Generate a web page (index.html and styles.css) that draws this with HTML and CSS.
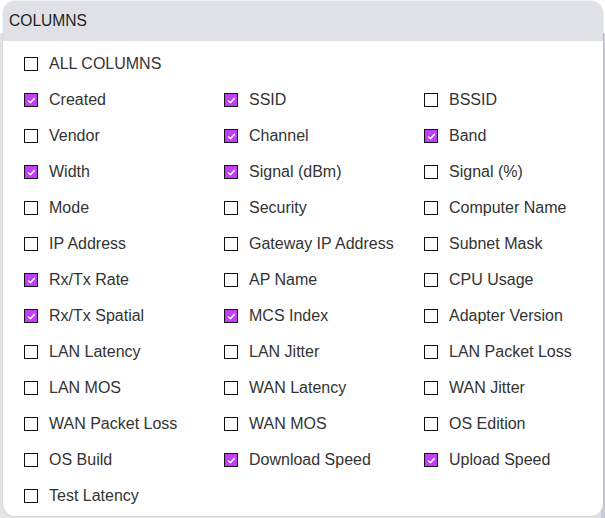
FILE: index.html
```html
<!DOCTYPE html>
<html>
<head>
<meta charset="utf-8">
<link rel="stylesheet" href="styles.css">
</head>
<body>
<div class="backdrop"></div>
<div class="popup">
  <div class="header">COLUMNS</div>
  <div class="body">
    <div class="row-all">
      <label class="item"><span class="box"></span><span class="label">ALL COLUMNS</span></label>
    </div>
    <div class="grid">
      <label class="item"><span class="box on"></span><span class="label">Created</span></label>
      <label class="item"><span class="box on"></span><span class="label">SSID</span></label>
      <label class="item"><span class="box"></span><span class="label">BSSID</span></label>

      <label class="item"><span class="box"></span><span class="label">Vendor</span></label>
      <label class="item"><span class="box on"></span><span class="label">Channel</span></label>
      <label class="item"><span class="box on"></span><span class="label">Band</span></label>

      <label class="item"><span class="box on"></span><span class="label">Width</span></label>
      <label class="item"><span class="box on"></span><span class="label">Signal (dBm)</span></label>
      <label class="item"><span class="box"></span><span class="label">Signal (%)</span></label>

      <label class="item"><span class="box"></span><span class="label">Mode</span></label>
      <label class="item"><span class="box"></span><span class="label">Security</span></label>
      <label class="item"><span class="box"></span><span class="label">Computer Name</span></label>

      <label class="item"><span class="box"></span><span class="label">IP Address</span></label>
      <label class="item"><span class="box"></span><span class="label">Gateway IP Address</span></label>
      <label class="item"><span class="box"></span><span class="label">Subnet Mask</span></label>

      <label class="item"><span class="box on"></span><span class="label">Rx/Tx Rate</span></label>
      <label class="item"><span class="box"></span><span class="label">AP Name</span></label>
      <label class="item"><span class="box"></span><span class="label">CPU Usage</span></label>

      <label class="item"><span class="box on"></span><span class="label">Rx/Tx Spatial</span></label>
      <label class="item"><span class="box on"></span><span class="label">MCS Index</span></label>
      <label class="item"><span class="box"></span><span class="label">Adapter Version</span></label>

      <label class="item"><span class="box"></span><span class="label">LAN Latency</span></label>
      <label class="item"><span class="box"></span><span class="label">LAN Jitter</span></label>
      <label class="item"><span class="box"></span><span class="label">LAN Packet Loss</span></label>

      <label class="item"><span class="box"></span><span class="label">LAN MOS</span></label>
      <label class="item"><span class="box"></span><span class="label">WAN Latency</span></label>
      <label class="item"><span class="box"></span><span class="label">WAN Jitter</span></label>

      <label class="item"><span class="box"></span><span class="label">WAN Packet Loss</span></label>
      <label class="item"><span class="box"></span><span class="label">WAN MOS</span></label>
      <label class="item"><span class="box"></span><span class="label">OS Edition</span></label>

      <label class="item"><span class="box"></span><span class="label">OS Build</span></label>
      <label class="item"><span class="box on"></span><span class="label">Download Speed</span></label>
      <label class="item"><span class="box on"></span><span class="label">Upload Speed</span></label>

      <label class="item"><span class="box"></span><span class="label">Test Latency</span></label>
    </div>
  </div>
</div>
</body>
</html>
```

FILE: styles.css
```css
html, body {
  margin: 0;
  padding: 0;
}
body {
  width: 605px;
  height: 518px;
  overflow: hidden;
  font-family: "Liberation Sans", Arial, sans-serif;
  background: linear-gradient(to bottom, #ffffff 33px, #e4e4e4 33px);
  position: relative;
}
.backdrop {
  position: absolute;
  right: 0;
  top: 33px;
  width: 4px;
  height: 485px;
  background: #c9ccd6;
}
.popup {
  position: relative;
  margin: 1px 2px 0 3px;
  height: 515px;
  background: #ffffff;
  border-radius: 12px;
  box-shadow: 0 0 2px rgba(0,0,0,0.18);
  overflow: hidden;
  box-sizing: border-box;
}
.header {
  height: 40px;
  background: #dfe1e6;
  color: #222;
  font-size: 15.6px;
  line-height: 39px;
  padding-left: 6px;
  box-sizing: border-box;
}
.body {
  padding: 5px 0 0 21px;
}
.row-all {
  height: 36px;
}
.grid {
  display: grid;
  grid-template-columns: 200px 200px 1fr;
  grid-auto-rows: 36px;
}
.item {
  display: flex;
  align-items: center;
  height: 36px;
  gap: 11px;
}
.box {
  width: 14px;
  height: 14px;
  box-sizing: border-box;
  border: 1.5px solid #111;
  background: #fff;
  flex: none;
}
.box.on {
  background-color: #c03ef6;
  background-image: url("data:image/svg+xml;utf8,<svg xmlns='http://www.w3.org/2000/svg' viewBox='0 0 14 14'><path d='M3.2 7.6 L5.6 9.8 L10.6 4.4' fill='none' stroke='white' stroke-width='2' stroke-linecap='round' stroke-linejoin='round'/></svg>");
  background-size: 11px 11px;
  background-position: center;
  background-repeat: no-repeat;
}
.label {
  font-size: 16px;
  color: #333;
  line-height: 18px;
}
```
